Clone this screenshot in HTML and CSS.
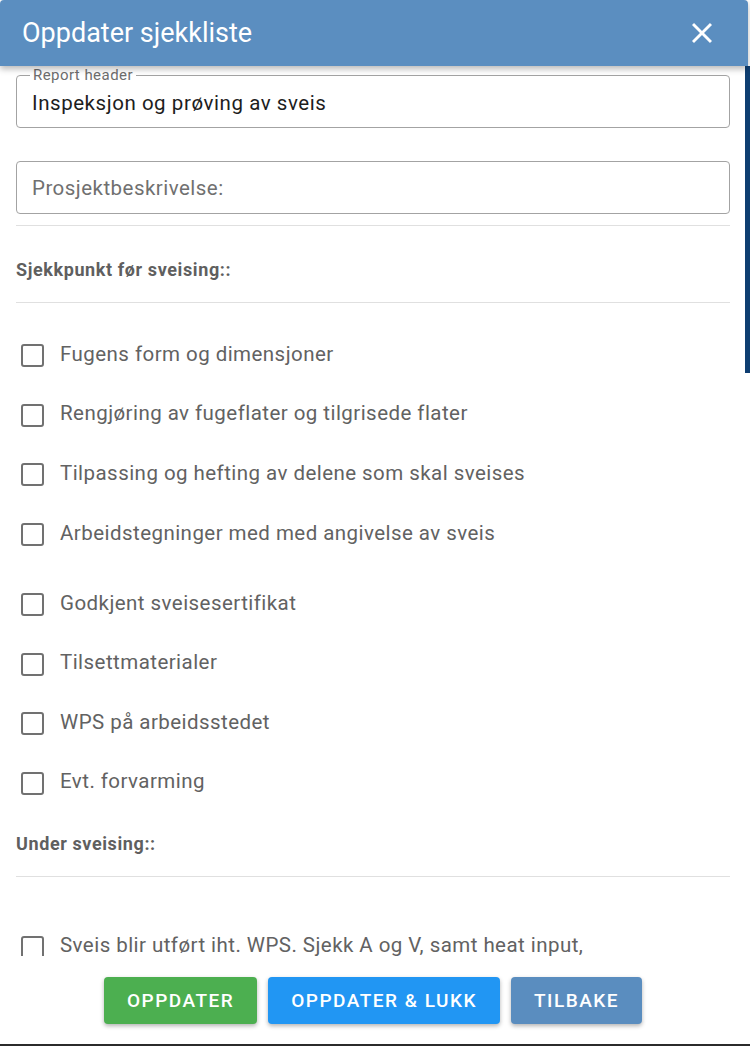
FILE: index.html
```html
<!DOCTYPE html>
<html lang="no">
<head>
<meta charset="utf-8">
<title>Oppdater sjekkliste</title>
<link rel="stylesheet" href="styles.css">
</head>
<body>
<div class="dialog">
  <header class="dlg-header">
    <h1 class="dlg-title">Oppdater sjekkliste</h1>
    <button class="close-btn" aria-label="Lukk">
      <svg viewBox="5 5 14 14" width="20" height="20" aria-hidden="true"><path fill="#fff" d="M19 6.41L17.59 5 12 10.59 6.41 5 5 6.41 10.59 12 5 17.59 6.41 19 12 13.41 17.59 19 19 17.59 13.41 12z"/></svg>
    </button>
  </header>

  <main class="dlg-body">
    <div class="scroll-thumb"></div>

    <fieldset class="field field-legend">
      <legend class="field-label">Report header</legend>
      <div class="field-value">Inspeksjon og prøving av sveis</div>
    </fieldset>

    <div class="field field-plain">
      <span class="placeholder">Prosjektbeskrivelse:</span>
    </div>

    <hr class="divider">
    <h2 class="section-title first">Sjekkpunkt før sveising::</h2>
    <hr class="divider">

    <ul class="checklist first">
      <li class="check-item"><span class="box"></span><span class="label">Fugens form og dimensjoner</span></li>
      <li class="check-item"><span class="box"></span><span class="label">Rengjøring av fugeflater og tilgrisede flater</span></li>
      <li class="check-item"><span class="box"></span><span class="label">Tilpassing og hefting av delene som skal sveises</span></li>
      <li class="check-item spaced"><span class="box"></span><span class="label">Arbeidstegninger med med angivelse av sveis</span></li>
      <li class="check-item"><span class="box"></span><span class="label">Godkjent sveisesertifikat</span></li>
      <li class="check-item"><span class="box"></span><span class="label">Tilsettmaterialer</span></li>
      <li class="check-item"><span class="box"></span><span class="label">WPS på arbeidsstedet</span></li>
      <li class="check-item"><span class="box"></span><span class="label">Evt. forvarming</span></li>
    </ul>

    <h2 class="section-title">Under sveising::</h2>
    <hr class="divider">

    <ul class="checklist second">
      <li class="check-item"><span class="box"></span><span class="label">Sveis blir utført iht. WPS. Sjekk A og V, samt heat input,</span></li>
    </ul>
  </main>

  <footer class="dlg-footer">
    <button class="btn btn-green">OPPDATER</button>
    <button class="btn btn-blue">OPPDATER &amp; LUKK</button>
    <button class="btn btn-steel">TILBAKE</button>
  </footer>
</div>
</body>
</html>
```

FILE: styles.css
```css
html, body {
  margin: 0;
  padding: 0;
  background: #fff;
}

body {
  font-family: Roboto, "Liberation Sans", Arial, sans-serif;
}

.dialog {
  width: 750px;
  height: 1046px;
  box-sizing: border-box;
  display: flex;
  flex-direction: column;
  border-bottom: 2px solid #2b2b2b;
  background: #fff;
}

/* Header */
.dlg-header {
  position: relative;
  z-index: 2;
  height: 66px;
  flex: 0 0 66px;
  margin-right: 2px;
  box-sizing: border-box;
  display: flex;
  align-items: center;
  justify-content: space-between;
  padding: 0 36px 0 22px;
  background: #5b8ec0;
  border-radius: 4px 4px 0 0;
  box-shadow: 0 3px 6px rgba(0, 0, 0, 0.28);
}

.dlg-title {
  margin: 0;
  font-size: 27px;
  font-weight: 400;
  color: #fff;
  line-height: 32px;
}

.close-btn {
  border: 0;
  background: transparent;
  padding: 0;
  width: 20px;
  height: 20px;
  display: flex;
  align-items: center;
  justify-content: center;
  cursor: pointer;
}

.close-btn svg {
  display: block;
}

/* Body */
.dlg-body {
  position: relative;
  flex: 1 1 auto;
  overflow: hidden;
  padding: 1px 20px 0 16px;
}

.scroll-thumb {
  position: absolute;
  top: 0;
  right: 0;
  width: 5px;
  height: 307px;
  background: #0e3e71;
}

.field {
  box-sizing: border-box;
  border: 1px solid #a3a3a3;
  border-radius: 4px;
}

.field-legend {
  margin: 0;
  padding: 8px 15px 12px;
  min-width: 0;
}

.field-label {
  padding: 0 3px;
  margin-left: -2px;
  font-size: 15px;
  line-height: 16px;
  letter-spacing: 0.45px;
  color: #6d6d6d;
}

.field-value {
  font-size: 20.5px;
  line-height: 24px;
  letter-spacing: 0.55px;
  color: #1d1d1d;
}

.field-plain {
  margin-top: 33px;
  height: 53px;
  display: flex;
  align-items: center;
  padding: 0 15px;
}

.placeholder {
  font-size: 20.5px;
  line-height: 24px;
  letter-spacing: 0.47px;
  color: #707070;
}

.divider {
  margin: 11px 0 0;
  border: 0;
  height: 1px;
  background: #e0e0e0;
}

.section-title {
  margin: 19px 0 20px;
  font-size: 18px;
  line-height: 24px;
  letter-spacing: 0.6px;
  font-weight: 700;
  color: #5f5f5f;
}

.section-title.first {
  margin-top: 32px;
}

.section-title + .divider {
  margin-top: 0;
}

.checklist {
  list-style: none;
  margin: 0;
  padding: 0;
}

.checklist.first {
  margin-top: 23px;
}

.checklist.second {
  margin-top: 40px;
}

.check-item {
  height: 59.6px;
  display: flex;
  align-items: center;
}

.check-item.spaced {
  margin-bottom: 10.5px;
}

.box {
  flex: 0 0 auto;
  width: 23px;
  height: 23px;
  box-sizing: border-box;
  border: 2px solid #717171;
  border-radius: 3px;
  margin-left: 5px;
  margin-right: 16px;
}

.label {
  font-size: 20.5px;
  line-height: 24px;
  letter-spacing: 0.45px;
  color: #626262;
  margin-top: -4px;
  white-space: nowrap;
}

/* Footer */
.dlg-footer {
  flex: 0 0 auto;
  display: flex;
  justify-content: center;
  gap: 11px;
  padding: 21px 4px 20px 0;
}

.btn {
  height: 47px;
  border: 0;
  border-radius: 4px;
  padding: 0 23px;
  font-family: Roboto, "Liberation Sans", Arial, sans-serif;
  font-size: 19px;
  font-weight: 500;
  letter-spacing: 1.5px;
  color: #fff;
  box-shadow: 0 2px 4px rgba(0, 0, 0, 0.3);
  cursor: pointer;
}

.btn-green { background: #4caf50; }
.btn-blue { background: #2196f3; }
.btn-steel { background: #5a8dbf; }
```
